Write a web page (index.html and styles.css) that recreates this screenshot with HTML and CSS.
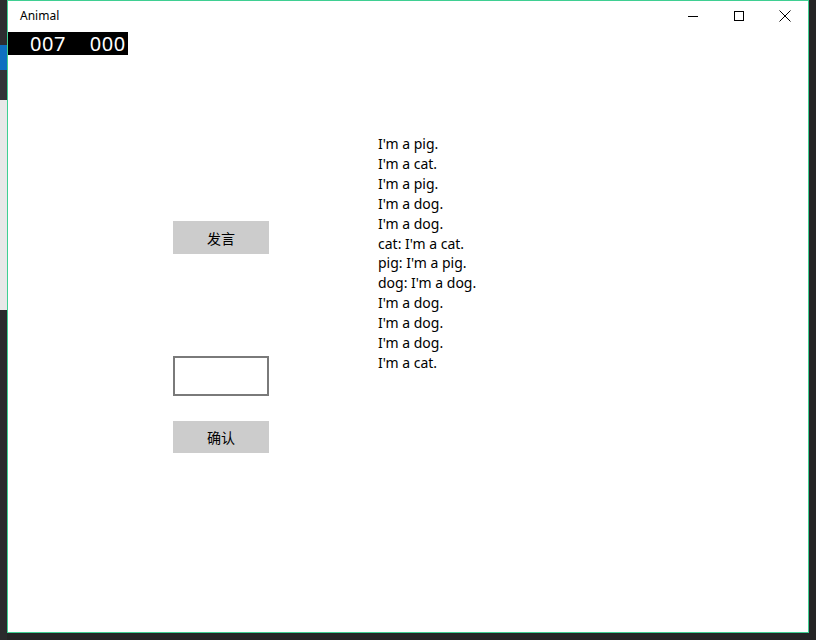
FILE: index.html
```html
<!DOCTYPE html>
<html>
<head>
<meta charset="utf-8">
<link rel="stylesheet" href="styles.css">
</head>
<body>
<div class="desk">
  <div class="edge">
    <div class="e1"></div><div class="e2"></div><div class="e3"></div><div class="e4"></div><div class="e5"></div>
  </div>
  <div class="window">
    <div class="titlebar">
      <span class="title">Animal</span>
      <div class="caps">
        <span class="cap"><svg width="10" height="10" viewBox="0 0 10 10"><path d="M0 5.5H10" stroke="#000" stroke-width="1"/></svg></span>
        <span class="cap"><svg width="10" height="10" viewBox="0 0 10 10"><rect x="0.5" y="0.5" width="9" height="9" fill="none" stroke="#000" stroke-width="1"/></svg></span>
        <span class="cap"><svg width="12" height="12" viewBox="0 0 12 12"><path d="M0.5 0.5L11.5 11.5M11.5 0.5L0.5 11.5" stroke="#000" stroke-width="1"/></svg></span>
      </div>
    </div>
    <div class="counter"><span>007</span><span>000</span></div>
    <div class="main">
      <div class="controls">
        <div class="btn btn-say">发言</div>
        <div class="input"></div>
        <div class="btn btn-ok">确认</div>
      </div>
      <div class="log">
        <div>I'm a pig.</div>
        <div>I'm a cat.</div>
        <div>I'm a pig.</div>
        <div>I'm a dog.</div>
        <div>I'm a dog.</div>
        <div>cat: I'm a cat.</div>
        <div>pig: I'm a pig.</div>
        <div>dog: I'm a dog.</div>
        <div>I'm a dog.</div>
        <div>I'm a dog.</div>
        <div>I'm a dog.</div>
        <div>I'm a cat.</div>
      </div>
    </div>
  </div>
</div>
</body>
</html>
```
FILE: styles.css
```css
html, body {
  margin: 0;
  padding: 0;
  background: #252526;
  width: 816px;
  height: 640px;
  overflow: hidden;
}
.desk {
  display: flex;
  height: 640px;
}
.edge {
  width: 7px;
  display: flex;
  flex-direction: column;
}
.e1 { height: 45px; background: #2d2d30; }
.e2 { height: 25px; background: #0e70c0; }
.e3 { height: 30px; background: #333337; }
.e4 { height: 210px; background: #e8e8e8; }
.e5 { flex: 1; background: #2a2a2c; }
.window {
  width: 800px;
  height: 631px;
  border: 1px solid #3fcf92;
  border-top-color: #3fcf92;
  background: #fff;
  font-family: "Noto Sans", "Noto Sans CJK SC", sans-serif;
  display: flex;
  flex-direction: column;
}
.titlebar {
  height: 31px;
  display: flex;
  align-items: center;
  justify-content: space-between;
}
.title {
  font-size: 12px;
  color: #000;
  padding-left: 12px;
  padding-bottom: 2px;
}
.caps {
  display: flex;
  height: 31px;
}
.cap {
  width: 46px;
  display: flex;
  align-items: center;
  justify-content: center;
  padding-bottom: 2px;
}
.counter {
  width: 120px;
  height: 23px;
  background: #000;
  color: #fff;
  font-size: 20px;
  line-height: 23px;
  display: flex;
  gap: 24px;
  padding-left: 22px;
  box-sizing: border-box;
  letter-spacing: 0.5px;
}
.main {
  display: flex;
  gap: 109px;
}
.controls {
  margin-left: 165px;
  width: 96px;
  margin-top: 166px;
  display: flex;
  flex-direction: column;
}
.btn {
  background: #cccccc;
  color: #000;
  font-size: 14px;
  display: flex;
  align-items: center;
  justify-content: center;
}
.btn-say { height: 33px; }
.input {
  margin-top: 102px;
  height: 40px;
  border: 2px solid #7a7a7a;
  box-sizing: border-box;
}
.btn-ok {
  margin-top: 25px;
  height: 32px;
}
.log {
  margin-top: 79px;
  font-size: 14px;
  line-height: 19.9px;
  color: #000;
}
```
